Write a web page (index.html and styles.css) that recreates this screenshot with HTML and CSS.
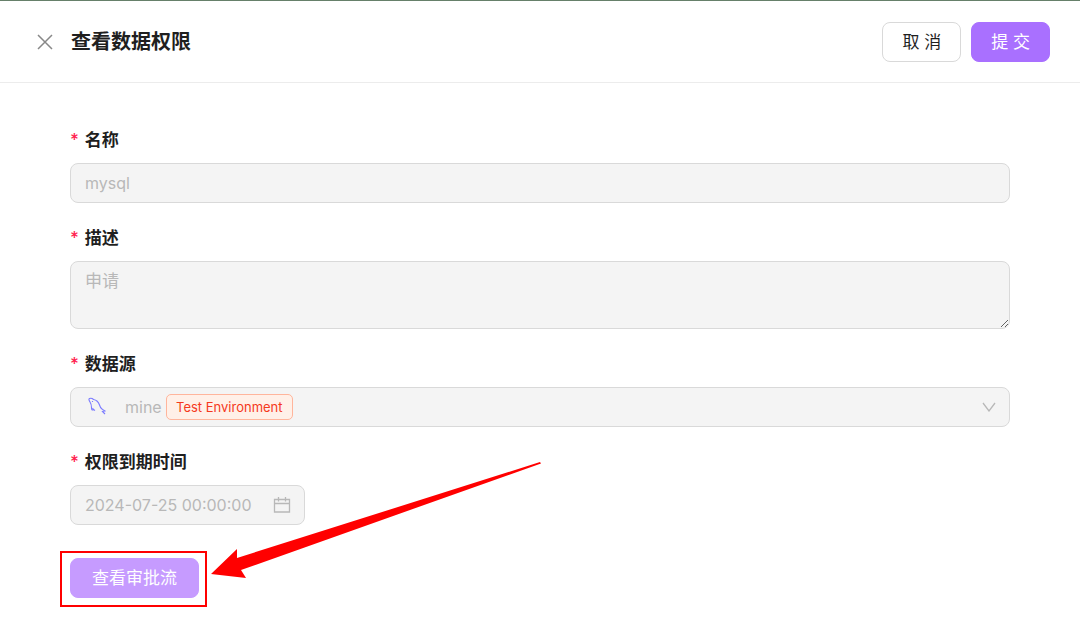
FILE: index.html
```html
<!DOCTYPE html>
<html lang="zh-CN">
	<head>
		<meta charset="utf-8">
		<meta name="viewport" content="width=device-width">
		<title>查看数据权限</title>
		<link rel="stylesheet" href="styles.css">
	</head>

	<body>
		<header class="header">
			<button type="button" class="close" aria-label="关闭">
				<svg width="16" height="16" viewBox="0 0 16 16"><path d="M1 1l14 14M15 1L1 15"/></svg>
			</button>
			<h1 class="title">查看数据权限</h1>
			<button type="button" class="btn">取 消</button>
			<button type="submit" form="perm" class="btn primary">提 交</button>
		</header>

		<form id="perm" class="form">
			<label class="label" for="name">名称</label>
			<input type="text" id="name" class="field" value="mysql" disabled>

			<label class="label" for="desc">描述</label>
			<textarea id="desc" class="field area" disabled>申请</textarea>

			<label class="label" for="source">数据源</label>
			<div class="select">
				<select id="source" class="field" disabled>
					<option>mine</option>
				</select>
				<!-- mysql dolphin -->
				<svg class="dolphin" width="18" height="18" viewBox="0 0 18 18">
					<path d="M5.500 12.500C4 14 3.500 12 3.500 10.500C3.500 8 3 6.500 2 5C1 3.500 .5 2 1.500 1.500C3 1 4.500 1.500 5.500 2.500C8.500 3 10.500 5 11.500 8C12 10 13 11.500 14.500 12.500L17 14L14.500 14.500L17 17"/>
					<path d="M5.500 12.500L4.500 11M5.500 12.500L7 13.500M4.500 4v1"/>
				</svg>
				<span class="tag">Test Environment</span>
				<svg class="arrow-down" width="14" height="10" viewBox="0 0 14 10"><path d="M1 1l6 8 6-8"/></svg>
			</div>

			<label class="label" for="expire">权限到期时间</label>
			<div class="date">
				<input type="text" id="expire" class="field" value="2024-07-25 00:00:00" disabled>
				<svg class="calendar" width="18" height="18" viewBox="0 0 18 18"><path d="M1.500 3.500h15v12.500h-15zM1.500 7.500h15M5.500 1v4.500M12.500 1v4.500"/></svg>
			</div>

			<div class="flow">
				<button type="button" class="btn primary light">查看审批流</button>
				<div class="mark"></div>
				<svg class="pointer" width="332" height="118" viewBox="0 0 332 118"><path d="M1 113L27 88v9L330 1l1 1.500L31 109l5 8z"/></svg>
			</div>
		</form>
	</body>
</html>
```

FILE: styles.css
```css
* {
	box-sizing: border-box
}
body {
	margin: 0;
	border-top: 1px solid #66806a;
	background: #fff;
	color: #1f1f1f;
	font: 17px/24px Inter, "Noto Sans CJK SC", sans-serif
}
svg {
	fill: none;
	stroke: #b8b8b8;
	stroke-width: 1.3
}
.header {
	display: flex;
	align-items: center;
	gap: 10px;
	height: 82px;
	padding: 0 30px 0 37px;
	border-bottom: 1px solid #ececec
}
.close {
	display: flex;
	padding: 0;
	border: 0;
	background: none
}
.close svg {
	stroke: #888;
	stroke-width: 1.5
}
.title {
	flex: 1;
	margin: 0 0 0 8px;
	font-size: 20px;
	font-weight: 600
}
.btn {
	height: 40px;
	padding: 0 19px;
	border: 1px solid #d9d9d9;
	border-radius: 8px;
	background: #fff;
	color: #1f1f1f;
	font: inherit
}
.primary {
	border-color: #a970ff;
	background: #a970ff;
	color: #fff
}
.light {
	padding: 0 21px;
	border-color: #c69bff;
	background: #c69bff
}
.form {
	display: flex;
	flex-direction: column;
	padding: 45px 70px 40px
}
.label {
	margin-bottom: 11px;
	font-weight: 600
}
.label::before {
	content: "*";
	margin-right: 6px;
	color: #ff2450;
	font-weight: 500
}
.field {
	display: block;
	width: 100%;
	height: 40px;
	margin: 0 0 23px;
	padding: 0 14px;
	border: 1px solid #d9d9d9;
	border-radius: 8px;
	background: #f4f4f4;
	color: #b8b8b8;
	font: inherit;
	font-size: 16px;
	opacity: 1
}
.area {
	height: 68px;
	padding: 7px 14px;
	font-size: 17px;
	resize: vertical
}
.select, .date {
	position: relative
}
.select .field {
	padding-left: 54px;
	appearance: none
}
/* icons and tag lie over the disabled controls */
.dolphin {
	position: absolute;
	left: 18px;
	top: 10px;
	stroke: #7b7bff;
	stroke-width: 1.1
}
.tag {
	position: absolute;
	left: 96px;
	top: 7px;
	padding: 0 9px;
	border: 1px solid #ffb59c;
	border-radius: 5px;
	background: #fff0e8;
	color: #f5391c;
	font-size: 13px
}
.arrow-down {
	position: absolute;
	right: 14px;
	top: 15px
}
.date {
	width: 235px
}
.calendar {
	position: absolute;
	right: 14px;
	top: 11px
}
.flow {
	position: relative;
	align-self: flex-start;
	margin-top: 10px
}
.mark {
	position: absolute;
	inset: -7px -8px -9px -10px;
	border: 2px solid #f00;
	pointer-events: none
}
.pointer {
	position: absolute;
	left: 140px;
	top: -97px;
	fill: #f00;
	stroke: none;
	pointer-events: none
}
```
